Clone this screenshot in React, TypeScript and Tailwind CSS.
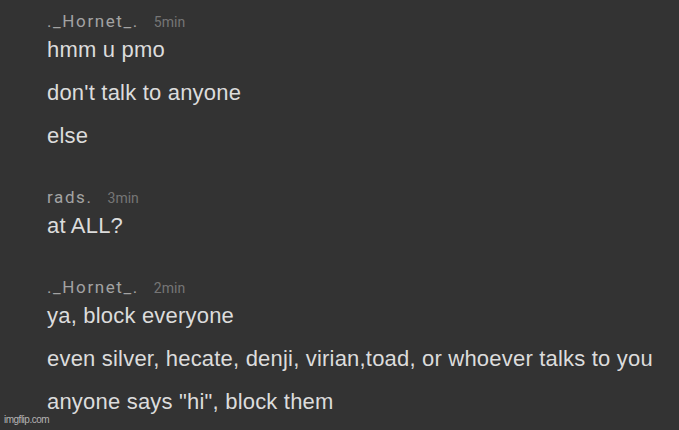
import React from "react";

interface Message {
    author: string;
    time: string;
    lines: string[];
}

const MESSAGES: Message[] = [
    {
        author: "._Hornet_.",
        time: "5min",
        lines: ["hmm u pmo", "don't talk to anyone", "else"],
    },
    {
        author: "rads.",
        time: "3min",
        lines: ["at ALL?"],
    },
    {
        author: "._Hornet_.",
        time: "2min",
        lines: [
            "ya, block everyone",
            "even silver, hecate, denji, virian,toad, or whoever talks to you",
            'anyone says "hi", block them',
        ],
    },
];

function MessageGroup({ author, time, lines }: Message) {
    return (
        <div className="flex flex-col">
            {/* Header */}
            <div className="flex items-baseline h-[14px] leading-[14px]">
                <span className="font-['Roboto',sans-serif] text-[17px] tracking-[1.6px] text-[#a3a3a3]">
                    {author}
                </span>
                <span className="ml-[15px] font-['Roboto',sans-serif] text-[14px] text-[#767676]">
                    {time}
                </span>
            </div>

            {/* Lines */}
            {lines.map((line, i) => (
                <p
                    key={i}
                    className="h-[43px] leading-[43px] text-[22px] tracking-[0.2px] text-[#dcdcdc] font-['Liberation_Sans',Arial,sans-serif] whitespace-nowrap"
                >
                    {line}
                </p>
            ))}
        </div>
    );
}

export default function App() {
    return (
        <div className="relative w-full min-h-screen h-[430px] bg-[#333333] overflow-hidden">
            <div className="flex flex-col gap-[33px] pt-[14px] pl-[47px]">
                {MESSAGES.map((m, i) => (
                    <MessageGroup key={i} {...m} />
                ))}
            </div>

            {/* Watermark */}
            <span className="absolute left-[4px] bottom-[5px] text-[10px] tracking-[-0.5px] leading-none text-[#b4b4b4] font-['Liberation_Sans',Arial,sans-serif]">
                imgflip.com
            </span>
        </div>
    );
}
